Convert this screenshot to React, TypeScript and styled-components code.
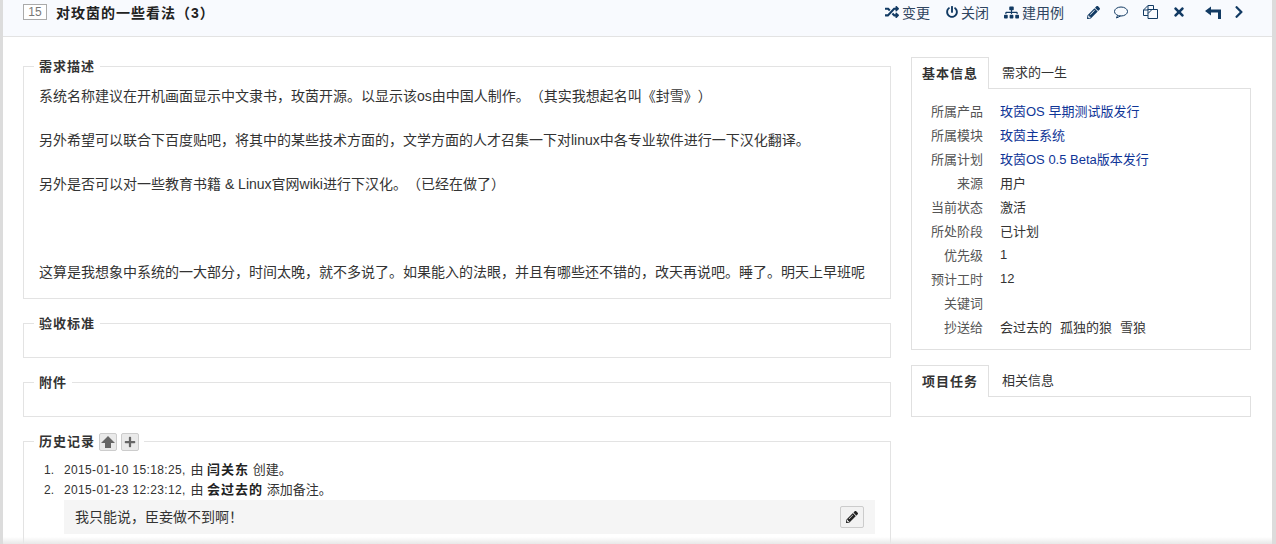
import React from 'react';
import styled, { createGlobalStyle } from 'styled-components';
import {
  FaRandom,
  FaPowerOff,
  FaSitemap,
  FaPencilAlt,
  FaTimes,
  FaChevronRight,
  FaPlus
} from 'react-icons/fa';

const GlobalStyle = createGlobalStyle`
  html, body {
    margin: 0;
    padding: 0;
    height: 544px;
    overflow: hidden;
    background: #dcdcdc;
    font-family: Arial, "Liberation Sans", "Noto Sans CJK SC", sans-serif;
    font-size: 13px;
    color: #333;
    text-spacing-trim: space-all;
  }
`;

const Page = styled.div`
  position: relative;
  width: 1269px;
  height: 544px;
  margin-left: 3px;
  background: #fff;
  overflow: hidden;
`;

const TitleBar = styled.header`
  display: flex;
  align-items: center;
  justify-content: space-between;
  height: 24px;
  padding: 0 26px 12px 20px;
  background: #f8fafe;
  border-bottom: 1px solid #e3e3e3;
`;

const TitleGroup = styled.div`
  display: flex;
  align-items: center;
`;

const IdBox = styled.span`
  box-sizing: border-box;
  width: 24px;
  height: 16px;
  margin-right: 9px;
  border: 1px solid #aaa;
  background: #fff;
  color: #777;
  font-size: 12px;
  line-height: 14px;
  text-align: center;
`;

const Title = styled.h1`
  margin: 0;
  font-size: 14px;
  font-weight: bold;
  letter-spacing: 1px;
  color: #222;
`;

const Actions = styled.div`
  display: flex;
  align-items: center;
  color: #123a63;
`;

const ActionLink = styled.a<{ $gap?: number }>`
  display: flex;
  align-items: center;
  gap: 3px;
  margin-right: ${({ $gap }) => $gap ?? 15}px;
  font-size: 14px;
  color: #2f4560;

  svg {
    color: #123a63;
  }
`;

const IconAction = styled.span<{ $gap?: number; $size?: number }>`
  display: flex;
  margin-right: ${({ $gap }) => $gap ?? 15}px;
  font-size: ${({ $size }) => $size ?? 13}px;
  color: #123a63;
`;

const Main = styled.main`
  display: grid;
  grid-template-columns: 868px 340px;
  gap: 20px;
  padding: 20px 21px 0 20px;
`;

const Column = styled.div`
  display: flex;
  flex-direction: column;
`;

const Section = styled.fieldset`
  margin: 0 0 16px;
  padding: 9px 15px 15px;
  min-width: 0;
  border: 1px solid #e3e3e3;
`;

const Legend = styled.legend`
  display: flex;
  align-items: center;
  gap: 4px;
  box-sizing: border-box;
  height: 18px;
  margin-left: -5px;
  padding: 0 5px 2px;
  font-size: 13px;
  font-weight: bold;
  letter-spacing: 1px;
  color: #333;
`;

const Description = styled.div`
  height: 198px;
  padding-top: 0.9px;
`;

const Paragraph = styled.p`
  margin: 0 0 22px;
  font-size: 14px;
  line-height: 22.13px;
  color: #333;
  white-space: nowrap;

  &:last-child {
    margin-bottom: 0;
  }
`;

const EmptyBody = styled.div`
  height: 0;
`;

const MiniButton = styled.button`
  display: flex;
  align-items: center;
  justify-content: center;
  width: 18px;
  height: 18px;
  margin: 2px 0 0;
  padding: 0;
  border: 1px solid #ccc;
  border-radius: 2px;
  background: #eaeaea;
  color: #666;
  font-size: 12px;
`;

const HistoryList = styled.ol`
  margin: 0;
  padding: 0 0 0 25px;
  font-size: 13px;
  line-height: 20px;
`;

const HistoryItem = styled.li`
  color: #333;

  &::marker {
    content: counter(list-item) ".   ";
    font-size: 12px;
  }
`;

const Stamp = styled.span`
  margin-right: 1px;
  font-size: 12px;
  letter-spacing: 0.35px;
`;

const Actor = styled.strong`
  letter-spacing: 1px;
  color: #222;
`;

const Comment = styled.div`
  display: flex;
  align-items: center;
  justify-content: space-between;
  box-sizing: border-box;
  height: 34px;
  padding: 0 11px;
  background: #f5f5f5;
  font-size: 14px;
  color: #333;
`;

const EditButton = styled.button`
  display: flex;
  align-items: center;
  justify-content: center;
  width: 24px;
  height: 22px;
  padding: 0;
  border: 1px solid #ccc;
  border-radius: 2px;
  background: #f2f2f2;
  color: #222;
  font-size: 12px;
`;

const TabGroup = styled.section`
  margin-bottom: 15px;
`;

const TabRow = styled.div`
  display: flex;
  height: 31px;
`;

const Tab = styled.div<{ $active?: boolean }>`
  position: relative;
  box-sizing: border-box;
  height: ${({ $active }) => ($active ? 32 : 31)}px;
  padding: 0 ${({ $active }) => ($active ? 10 : 13)}px;
  border: ${({ $active }) => ($active ? '1px solid #e0e0e0' : 'none')};
  border-bottom: none;
  background: #fff;
  font-size: 13px;
  font-weight: ${({ $active }) => ($active ? 'bold' : 'normal')};
  letter-spacing: ${({ $active }) => ($active ? 1 : 0)}px;
  line-height: 31px;
  color: #333;
  z-index: 1;
`;

const TabPanel = styled.div<{ $empty?: boolean }>`
  box-sizing: border-box;
  min-height: ${({ $empty }) => ($empty ? 21 : 0)}px;
  padding: ${({ $empty }) => ($empty ? '0' : '9px 0 11px')};
  border: 1px solid #e0e0e0;
`;

const InfoTable = styled.table`
  border-collapse: collapse;
  font-size: 13px;
`;

const InfoLabel = styled.th`
  width: 71px;
  height: 24px;
  padding: 0;
  text-align: right;
  font-weight: normal;
  color: #555;
`;

const InfoValue = styled.td`
  padding: 0 0 0 17px;
  color: #333;
`;

const InfoLink = styled.a`
  color: #0f3597;
`;

const CcName = styled.span`
  margin-right: 8px;
`;

const BottomEdge = styled.div`
  position: absolute;
  left: -3px;
  right: 0;
  bottom: 0;
  height: 7px;
  background: linear-gradient(rgba(236, 236, 236, 0), #e8e8e8);
`;

const CommentIcon = () => (
  <svg width="14" height="13" viewBox="0 0 14 13" fill="none" stroke="currentColor">
    <ellipse cx="7" cy="5.5" rx="6.5" ry="4.5" />
    <path d="M3.5 9.5 2.5 12 6.5 10" />
  </svg>
);

const CopyIcon = () => (
  <svg width="15" height="14" viewBox="0 0 15 14" fill="none" stroke="currentColor">
    <path d="M.5 10.5V5L5 .5h5.5V4M.5 10.5H5M5 .5V5H.5" />
    <path d="M5 4.5h9.5v9H5zM5 8.5 9 4.5" />
  </svg>
);

const ReplyIcon = () => (
  <svg width="16" height="13" viewBox="0 0 16 13" fill="currentColor">
    <path d="M0 5 6 .5V3.5H16V13H13V6.5H6V9.5Z" />
  </svg>
);

const UpIcon = () => (
  <svg width="14" height="14" viewBox="0 0 14 14" fill="currentColor">
    <path d="M7 1 14 8H10V13H4V8H0Z" />
  </svg>
);

const infoRows: { label: string; value: React.ReactNode }[] = [
  { label: '所属产品', value: <InfoLink>玫茵OS 早期测试版发行</InfoLink> },
  { label: '所属模块', value: <InfoLink>玫茵主系统</InfoLink> },
  { label: '所属计划', value: <InfoLink>玫茵OS 0.5 Beta版本发行</InfoLink> },
  { label: '来源', value: '用户' },
  { label: '当前状态', value: '激活' },
  { label: '所处阶段', value: '已计划' },
  { label: '优先级', value: '1' },
  { label: '预计工时', value: '12' },
  { label: '关键词', value: '' },
  {
    label: '抄送给',
    value: (
      <>
        <CcName>会过去的</CcName>
        <CcName>孤独的狼</CcName>
        <CcName>雪狼</CcName>
      </>
    )
  }
];

const App: React.FC = () => {
  return (
    <>
      <GlobalStyle />
      <Page>
        <TitleBar>
          <TitleGroup>
            <IdBox>15</IdBox>
            <Title>对玫茵的一些看法（3）</Title>
          </TitleGroup>
          <Actions>
            <ActionLink $gap={16}><FaRandom size={14} />变更</ActionLink>
            <ActionLink><FaPowerOff size={12} />关闭</ActionLink>
            <ActionLink $gap={23}><FaSitemap size={15} />建用例</ActionLink>
            <IconAction $gap={14}><FaPencilAlt /></IconAction>
            <IconAction><CommentIcon /></IconAction>
            <IconAction $gap={14}><CopyIcon /></IconAction>
            <IconAction $gap={19} $size={14}><FaTimes /></IconAction>
            <IconAction $gap={11}><ReplyIcon /></IconAction>
            <IconAction $gap={0} $size={14}><FaChevronRight /></IconAction>
          </Actions>
        </TitleBar>
        <Main>
          <Column>
            <Section>
              <Legend>需求描述</Legend>
              <Description>
                <Paragraph>系统名称建议在开机画面显示中文隶书，玫茵开源。以显示该os由中国人制作。（其实我想起名叫《封雪》）</Paragraph>
                <Paragraph>另外希望可以联合下百度贴吧，将其中的某些技术方面的，文学方面的人才召集一下对linux中各专业软件进行一下汉化翻译。</Paragraph>
                <Paragraph>另外是否可以对一些教育书籍 &amp; Linux官网wiki进行下汉化。（已经在做了）</Paragraph>
                <Paragraph>&nbsp;</Paragraph>
                <Paragraph>这算是我想象中系统的一大部分，时间太晚，就不多说了。如果能入的法眼，并且有哪些还不错的，改天再说吧。睡了。明天上早班呢</Paragraph>
              </Description>
            </Section>
            <Section>
              <Legend>验收标准</Legend>
              <EmptyBody />
            </Section>
            <Section>
              <Legend>附件</Legend>
              <EmptyBody />
            </Section>
            <Section>
              <Legend>
                历史记录
                <MiniButton><UpIcon /></MiniButton>
                <MiniButton><FaPlus /></MiniButton>
              </Legend>
              <HistoryList>
                <HistoryItem><Stamp>2015-01-10 15:18:25,</Stamp> 由 <Actor>闫关东</Actor> 创建。</HistoryItem>
                <HistoryItem>
                  <Stamp>2015-01-23 12:23:12,</Stamp> 由 <Actor>会过去的</Actor> 添加备注。
                  <Comment>
                    我只能说，臣妾做不到啊！
                    <EditButton><FaPencilAlt /></EditButton>
                  </Comment>
                </HistoryItem>
              </HistoryList>
            </Section>
          </Column>
          <Column>
            <TabGroup>
              <TabRow>
                <Tab $active>基本信息</Tab>
                <Tab>需求的一生</Tab>
              </TabRow>
              <TabPanel>
                <InfoTable>
                  <tbody>
                    {infoRows.map(row => (
                      <tr key={row.label}>
                        <InfoLabel>{row.label}</InfoLabel>
                        <InfoValue>{row.value}</InfoValue>
                      </tr>
                    ))}
                  </tbody>
                </InfoTable>
              </TabPanel>
            </TabGroup>
            <TabGroup>
              <TabRow>
                <Tab $active>项目任务</Tab>
                <Tab>相关信息</Tab>
              </TabRow>
              <TabPanel $empty />
            </TabGroup>
          </Column>
        </Main>
        <BottomEdge />
      </Page>
    </>
  );
};

export default App;
